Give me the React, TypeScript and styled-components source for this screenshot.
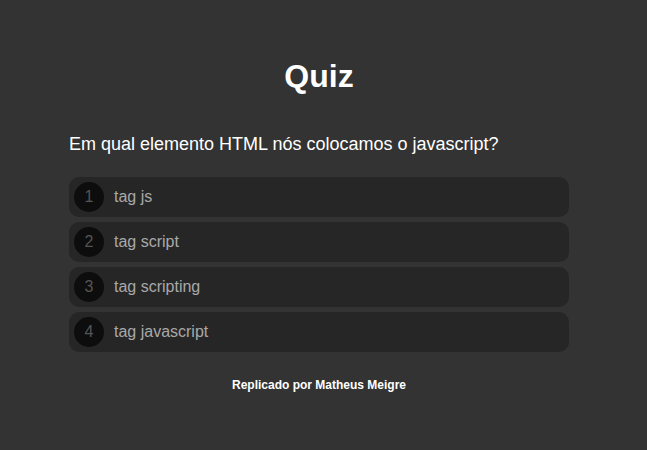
import React from "react";
import styled, { createGlobalStyle } from "styled-components";

const Global = createGlobalStyle`
  html, body { margin: 0; padding: 0; background: #333333; }
  body { font-family: "Liberation Sans", Arial, sans-serif; color: #fff; }
`;

const Page = styled.main`
  min-height: 450px;
  padding: 58px 9px 0 0;
  box-sizing: border-box;
`;

const Container = styled.div`
  width: 500px;
  margin: 0 auto;
  display: flex;
  flex-direction: column;
`;

const Title = styled.h1`
  margin: 0;
  font-size: 32px;
  font-weight: 700;
  text-align: center;
  color: #ffffff;
`;

const Question = styled.h2`
  margin: 39px 0 22px;
  font-size: 18px;
  font-weight: 400;
  color: #ffffff;
`;

const Options = styled.ol`
  list-style: none;
  margin: 0;
  padding: 0;
  display: flex;
  flex-direction: column;
  gap: 5px;
`;

const Option = styled.li`
  height: 40px;
  box-sizing: border-box;
  padding: 0 5px;
  background: #262626;
  border-radius: 10px;
  display: flex;
  align-items: center;
  gap: 10px;
  font-size: 16px;
  color: #a9a9a9;
`;

const Num = styled.span`
  width: 30px;
  height: 30px;
  border-radius: 50%;
  background: #0d0d0d;
  color: #555555;
  display: flex;
  align-items: center;
  justify-content: center;
  font-size: 16px;
`;

const Footer = styled.p`
  margin: 26px 0 0;
  font-size: 12px;
  font-weight: 700;
  text-align: center;
  color: #ffffff;
`;

const answers = ["tag js", "tag script", "tag scripting", "tag javascript"];

export default function App() {
  return (
    <>
      <Global />
      <Page>
        <Container>
          <Title>Quiz</Title>
          <Question>Em qual elemento HTML nós colocamos o javascript?</Question>
          <Options>
            {answers.map((a, i) => (
              <Option key={a}>
                <Num>{i + 1}</Num>
                {a}
              </Option>
            ))}
          </Options>
          <Footer>Replicado por Matheus Meigre</Footer>
        </Container>
      </Page>
    </>
  );
}
